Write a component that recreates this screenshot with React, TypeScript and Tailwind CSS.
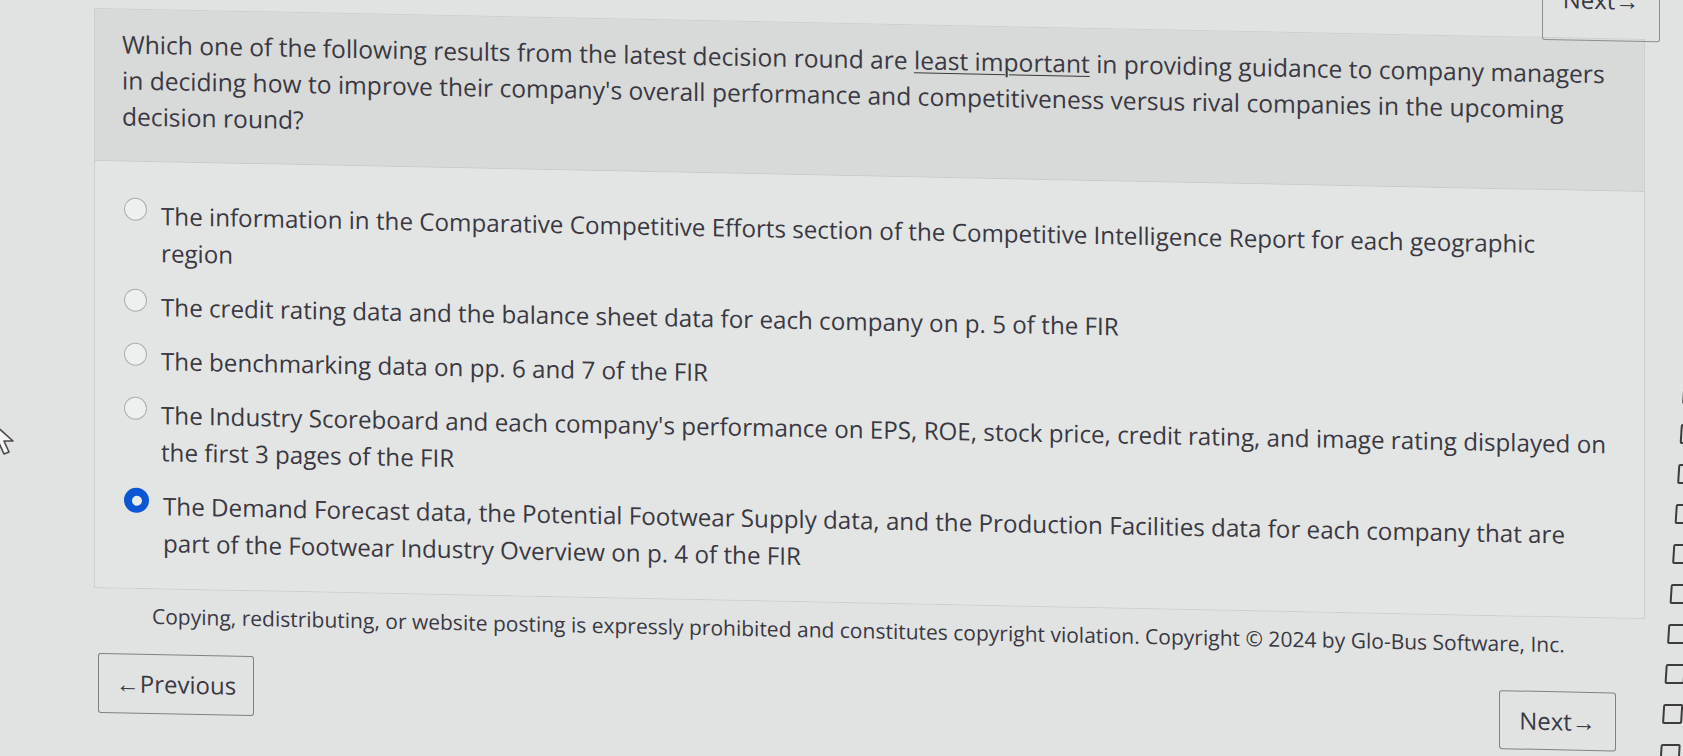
import type { ReactNode } from "react";

type Option = { lines: string[]; selected?: boolean };

const options: Option[] = [
  {
    lines: [
      "The information in the Comparative Competitive Efforts section of the Competitive Intelligence Report for each geographic",
      "region",
    ],
  },
  {
    lines: [
      "The credit rating data and the balance sheet data for each company on p. 5 of the FIR",
    ],
  },
  { lines: ["The benchmarking data on pp. 6 and 7 of the FIR"] },
  {
    lines: [
      "The Industry Scoreboard and each company's performance on EPS, ROE, stock price, credit rating, and image rating displayed on",
      "the first 3 pages of the FIR",
    ],
  },
  {
    lines: [
      "The Demand Forecast data, the Potential Footwear Supply data, and the Production Facilities data for each company that are",
      "part of the Footwear Industry Overview on p. 4 of the FIR",
    ],
    selected: true,
  },
];

function Radio({ checked }: { checked?: boolean }) {
  if (checked) {
    return (
      <span className="mt-[1px] flex h-[25px] w-[25px] shrink-0 items-center justify-center rounded-full bg-[#0b56d4]">
        <span className="h-[10px] w-[10px] rounded-full bg-[#e9ebea]" />
      </span>
    );
  }
  return (
    <span className="mt-[1px] h-[23px] w-[23px] shrink-0 rounded-full border-[1.5px] border-[#aeb0b0] bg-[#eeefef]" />
  );
}

function Line({ children }: { children: ReactNode }) {
  return <span className="block whitespace-nowrap">{children}</span>;
}

export default function App() {
  return (
    <div className="relative flex h-[756px] w-[1683px] overflow-hidden bg-[#e1e3e2] font-['Open_Sans',sans-serif] text-[#3a3842]">
      {/* mouse pointer at the left edge */}
      <svg
        className="absolute left-[-9px] top-[421px]"
        width="28"
        height="38"
        viewBox="0 0 28 38"
        aria-hidden
      >
        <path
          d="M2 2 L2 28 L8 22 L13 33 L18 31 L13 20 L22 20 Z"
          fill="#f4f4f4"
          stroke="#4a4a4a"
          strokeWidth="1.6"
          strokeLinejoin="round"
        />
      </svg>

      <div className="w-[1660px] shrink-0 origin-top-left skew-y-[1.15deg] pl-[94px]">
        {/* top next button, mostly scrolled out of view */}
        <div className="flex h-0 w-[1566px] justify-end">
          <button className="-mt-[55px] flex h-[64px] w-[118px] items-start justify-center rounded-[3px] border border-[#8d8f8f] pt-[4px] text-[24px] text-[#3a3842]">
            Next→
          </button>
        </div>

        <div className="mt-[6px] w-[1551px] border border-[#cdcfce]">
          <div className="border-b border-[#c9cbca] bg-[#d8dad9] pb-[26px] pl-[27px] pt-[17px] text-[24.6px] leading-[36px]">
            <Line>
              Which one of the following results from the latest decision round are{" "}
              <span className="underline decoration-1 underline-offset-[3px]">least important</span>{" "}
              in providing guidance to company managers
            </Line>
            <Line>
              in deciding how to improve their company's overall performance and competitiveness versus rival companies in the upcoming
            </Line>
            <Line>decision round?</Line>
          </div>

          <div className="flex flex-col gap-[17px] bg-[#e3e5e4] pb-[27px] pl-[29px] pt-[35px] text-[24.2px] leading-[37px]">
            {options.map((o, i) => (
              <label key={i} className="flex items-start gap-[14px]">
                <Radio checked={o.selected} />
                <span>
                  {o.lines.map((l, j) => (
                    <Line key={j}>{l}</Line>
                  ))}
                </span>
              </label>
            ))}
          </div>
        </div>

        <p className="mt-[13px] whitespace-nowrap pl-[58px] text-[21px] leading-[28px]">
          Copying, redistributing, or website posting is expressly prohibited and constitutes copyright violation. Copyright © 2024 by Glo-Bus Software, Inc.
        </p>

        <div className="mt-[24px] flex w-[1522px] items-start justify-between">
          <button className="ml-[4px] flex h-[60px] w-[156px] items-center justify-center rounded-[3px] border-[1.5px] border-[#7f8181] text-[24px] text-[#3a3842]">
            ←Previous
          </button>
          <button className="mt-[9px] flex h-[59px] w-[117px] items-center justify-center rounded-[3px] border-[1.5px] border-[#7f8181] text-[24px] text-[#3a3842]">
            Next→
          </button>
        </div>
      </div>

      {/* edge of a neighbouring panel */}
      <div className="flex w-[23px] shrink-0 origin-bottom-left -skew-x-[3.6deg] flex-col gap-[20px] pt-[384px]">
        {Array.from({ length: 10 }).map((_, i) => (
          <span
            key={i}
            className="block h-[20px] w-[20px] shrink-0 rounded-[2px] border-2 border-[#3c3c3c]"
          />
        ))}
      </div>
    </div>
  );
}
